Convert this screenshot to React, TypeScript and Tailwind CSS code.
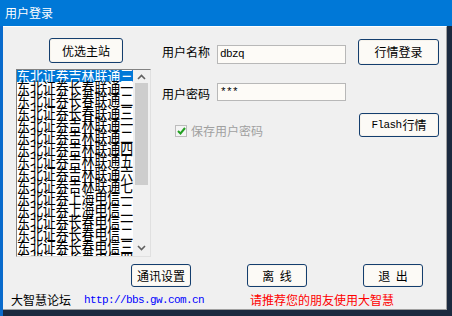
import React from "react";

const CN = "font-[family-name:'Noto_Sans_CJK_SC',sans-serif]";
const MONO = "font-[family-name:'Liberation_Mono',monospace]";

const items = [
  "东北证券吉林联通三",
  "东北证券长春联通一",
  "东北证券长春联通二",
  "东北证券长春联通三",
  "东北证券吉林联通一",
  "东北证券吉林联通二",
  "东北证券吉林联通四",
  "东北证券吉林联通五",
  "东北证券吉林联通六",
  "东北证券吉林联通七",
  "东北证券上海电信一",
  "东北证券上海电信二",
  "东北证券长春电信一",
  "东北证券长春电信二",
  "东北证券长春电信三",
  "东北证券长春电信四",
];

function Btn({ children, className = "" }: { children: React.ReactNode; className?: string }) {
  return (
    <div
      className={`flex items-center justify-center rounded-[3px] border border-[#143e6e] bg-[#fcfaf6] text-[12px] leading-none text-black shadow-[inset_0_0_0_1px_#f7f3ec] ${CN} ${className}`}
    >
      {children}
    </div>
  );
}

export default function App() {
  return (
    <div className={`w-[452px] h-[316px] flex flex-col bg-[#1b2a3f] ${CN}`}>
      {/* title bar */}
      <div className="h-[26px] bg-[#0078d7] flex items-center pl-[5px] text-white text-[12px] leading-none shrink-0">
        用户登录
      </div>
      <div className="flex-1 flex">
        <div className="w-[3px] bg-[#0a6bcc]" />
        <div className="w-[444px] h-[284px] flex flex-col bg-[#f0f0f0] border-t border-white border-r border-b border-r-[#a0a0a0] border-b-[#a0a0a0]">
          {/* top section */}
          <div className="flex h-[230px]">
            {/* left column */}
            <div className="ml-[13px] w-[135px] flex flex-col pt-[11px]">
              <Btn className="ml-[33px] w-[74px] h-[25px]">优选主站</Btn>
              <div className="mt-[6px] h-[188px] flex border border-t-[#828282] border-l-[#828282] border-r-[#e0e0e0] border-b-[#e0e0e0] bg-white overflow-hidden">
                <div className="w-[116px] overflow-hidden flex flex-col">
                  {items.map((t, i) => (
                    <div
                      key={t}
                      className={`h-[12.2px] shrink-0 leading-[12.2px] text-[13px] whitespace-nowrap ${
                        i === 0 ? "bg-[#0078d7] text-white" : "text-black"
                      }`}
                    >
                      <span className="inline-block origin-center scale-y-[1.2] tracking-[-0.1px]">{t}</span>
                    </div>
                  ))}
                </div>
                <div className="w-[17px] bg-[#f0f0f0] flex flex-col items-center">
                  <div className="h-[13px] flex items-center justify-center">
                    <svg width="9" height="6" viewBox="0 0 9 6">
                      <path d="M1 5 L4.5 1.5 L8 5" stroke="#606060" strokeWidth="1.6" fill="none" />
                    </svg>
                  </div>
                  <div className="w-[13px] h-[102px] bg-[#cdcdcd]" />
                  <div className="flex-1" />
                  <div className="h-[16px] flex items-center justify-center">
                    <svg width="9" height="6" viewBox="0 0 9 6">
                      <path d="M1 1 L4.5 4.5 L8 1" stroke="#606060" strokeWidth="1.6" fill="none" />
                    </svg>
                  </div>
                </div>
              </div>
            </div>
            {/* right area */}
            <div className="ml-[11px] w-[277px] flex flex-col pt-[12px]">
              <div className="flex h-[26px]">
                <div className="w-[55px] pt-[6px] text-[12px] leading-[14px]">用户名称</div>
                <div className={`mt-[6px] h-[19px] w-[129px] bg-[#fdfbf7] border border-[#b8b8b8] pl-[2px] text-[11px] leading-[17px] tracking-[-0.6px] ${MONO}`}>
                  dbzq
                </div>
                <Btn className="ml-[12px] w-[81px] h-[26px]">行情登录</Btn>
              </div>
              <div className="flex mt-[18px] h-[18px]">
                <div className="w-[55px] pt-[4px] text-[12px] leading-[14px]">用户密码</div>
                <div className={`h-[18px] w-[129px] bg-[#fdfbf7] border border-[#b8b8b8] pl-[2px] text-[11px] leading-[16px] tracking-[-0.6px] ${MONO}`}>
                  ***
                </div>
              </div>
              <div className="flex mt-[12px] h-[24px]">
                <div className="ml-[13px] mt-[12px] w-[12px] h-[12px] border border-[#bcbcbc] bg-[#f4f4f4] flex items-center justify-center">
                  <svg width="9" height="8" viewBox="0 0 9 8">
                    <path d="M1 4 L3.5 6.5 L8 1" stroke="#22a022" strokeWidth="2" fill="none" />
                  </svg>
                </div>
                <div className="ml-[4px] mt-[11px] text-[12px] leading-[14px] text-[#a0a0a0]">保存用户密码</div>
                <Btn className="ml-auto w-[80px] h-[24px]">
                  <span className={`${MONO} text-[11px] tracking-[-0.6px] mr-[1px]`}>Flash</span>行情
                </Btn>
              </div>
            </div>
          </div>
          {/* bottom buttons */}
          <div className="flex mt-[7px] pl-[128px] gap-[56px]">
            <Btn className="w-[60px] h-[23px]">通讯设置</Btn>
            <Btn className="w-[60px] h-[23px]">离&nbsp;&nbsp;线</Btn>
            <Btn className="w-[60px] h-[23px]">退&nbsp;&nbsp;出</Btn>
          </div>
          {/* footer */}
          <div className="flex items-center mt-[6px] pl-[8px] h-[14px]">
            <div className="w-[73px] text-[12px] leading-none text-black">大智慧论坛</div>
            <div className={`w-[166px] text-[11px] leading-none text-[#0000ff] tracking-[-0.6px] ${MONO}`}>http://bbs.gw.com.cn</div>
            <div className="text-[12px] leading-none text-[#ff0000]">请推荐您的朋友使用大智慧</div>
          </div>
        </div>
        <div className="w-[5px] bg-[#1b2a3f]" />
      </div>
    </div>
  );
}
